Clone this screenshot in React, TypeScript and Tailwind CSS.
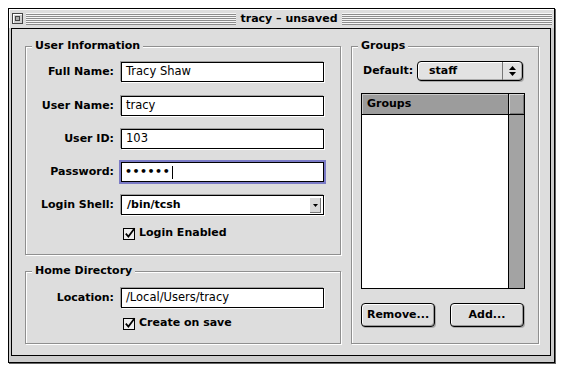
import React from 'react';

const sys = "font-['DejaVu_Sans',sans-serif] font-bold text-[11px] text-black";
const geneva = "font-['DejaVu_Sans',sans-serif] text-[11.5px] text-black";

const stripes =
  'bg-[image:repeating-linear-gradient(180deg,#f6f6f6_0px,#f6f6f6_1px,#8c8c8c_1px,#8c8c8c_2px)]';

function GroupBox({ title, className, children }: { title: string; className?: string; children?: React.ReactNode }) {
  return (
    <div className={`border border-[#8f8f8f] shadow-[inset_1px_1px_0_#fff,1px_1px_0_#fff] ${className ?? ''}`}>
      <div className={`-mt-[8px] ml-[6px] h-[14px] w-fit bg-[#dddddd] px-[3px] leading-[14px] ${sys}`}>{title}</div>
      {children}
    </div>
  );
}

function FieldRow({ label, className, children }: { label: string; className?: string; children: React.ReactNode }) {
  return (
    <div className={`flex h-[20px] items-center ${className ?? ''}`}>
      <div className={`w-[88px] text-right ${sys}`}>{label}</div>
      <div className="ml-[7px]">{children}</div>
    </div>
  );
}

function TextField({ value }: { value: string }) {
  return (
    <div
      className={`flex h-[20px] w-[203px] items-center border border-black bg-white pl-[4px] shadow-[1px_1px_0_#fff,-1px_-1px_0_#a0a0a0] ${geneva}`}
    >
      {value}
    </div>
  );
}

function PasswordField() {
  return (
    <div className="flex h-[20px] w-[203px] items-center border border-black bg-white pl-[3px] shadow-[0_0_0_2px_#7a7ac6]">
      <span className={`${sys} tracking-[0.5px]`}>••••••</span>
      <span className="ml-[2px] h-[13px] w-px bg-black" />
    </div>
  );
}

function ShellPopup() {
  return (
    <div className="flex h-[20px] w-[203px] items-center border border-black bg-white pl-[5px] pr-[2px] shadow-[1px_1px_0_#fff,-1px_-1px_0_#a0a0a0]">
      <span className={`flex-1 ${sys}`}>/bin/tcsh</span>
      <div className="flex h-[16px] w-[12px] items-center justify-center bg-[#d8d8d8] shadow-[inset_1px_1px_0_#fff,inset_-1px_-1px_0_#777]">
        <svg width="5" height="3" viewBox="0 0 5 3">
          <path d="M0 0h5L2.5 3z" fill="#000" />
        </svg>
      </div>
    </div>
  );
}

function Check({ label, className }: { label: string; className?: string }) {
  return (
    <div className={`flex h-[14px] items-center ${className ?? ''}`}>
      <svg width="13" height="13" viewBox="0 0 13 13" className="ml-[97px]">
        <rect x="0.5" y="1.5" width="11" height="11" fill="#eeeeee" stroke="#000" />
        <path d="M2.8 6.6 L5.4 9.6 L11.6 1.2" fill="none" stroke="#000" strokeWidth="1.7" />
      </svg>
      <span className={`ml-[3px] ${sys}`}>{label}</span>
    </div>
  );
}

function Button({ label, className }: { label: string; className?: string }) {
  return (
    <div
      className={`flex h-[24px] w-[74px] items-center justify-center rounded-[4px] border border-black bg-[#dddddd] shadow-[inset_1px_1px_0_#fff,inset_-1px_-1px_0_#999,1px_1px_0_#aaa] ${sys} ${className ?? ''}`}
    >
      {label}
    </div>
  );
}

function TitleBar() {
  return (
    <div className="flex h-[19px] items-center bg-[#dddddd] pl-[3px] pr-[2px] shadow-[inset_1px_1px_0_#fff]">
      <div className="flex h-[11px] w-[11px] items-center justify-center border border-[#444] bg-[#cfcfcf] shadow-[inset_1px_1px_0_#fff]">
        <div className="h-[5px] w-[5px] border border-[#444] bg-[#aaa]" />
      </div>
      <div className={`ml-[3px] h-[12px] flex-1 ${stripes}`} />
      <div className={`px-[4px] leading-[14px] ${sys}`}>tracy – unsaved</div>
      <div className={`h-[12px] flex-1 ${stripes}`} />
    </div>
  );
}

export default function App() {
  return (
    <div className="min-h-screen bg-white pl-[8px] pt-[8px]">
      <div className="flex h-[355px] w-[547px] flex-col border border-black bg-[#cccccc] shadow-[1px_1px_0_#666]">
        <TitleBar />
        <div className="ml-[2px] mr-[3px] flex h-[328px] border border-black bg-[#dddddd] pl-[13px] pr-[11px] pt-[17px]">
          {/* left column */}
          <div className="flex w-[316px] flex-col">
            <GroupBox title="User Information" className="h-[209px]">
              <div className="mt-[9px] flex flex-col gap-[13px]">
                <FieldRow label="Full Name:">
                  <TextField value="Tracy Shaw" />
                </FieldRow>
                <FieldRow label="User Name:" className="mt-[1px]">
                  <TextField value="tracy" />
                </FieldRow>
                <FieldRow label="User ID:">
                  <TextField value="103" />
                </FieldRow>
                <FieldRow label="Password:">
                  <PasswordField />
                </FieldRow>
                <FieldRow label="Login Shell:">
                  <ShellPopup />
                </FieldRow>
                <Check label="Login Enabled" className="-mt-[2px]" />
              </div>
            </GroupBox>

            <GroupBox title="Home Directory" className="mt-[16px] h-[73px]">
              <div className="mt-[10px] flex flex-col gap-[8px]">
                <FieldRow label="Location:">
                  <TextField value="/Local/Users/tracy" />
                </FieldRow>
                <Check label="Create on save" />
              </div>
            </GroupBox>
          </div>

          {/* right column */}
          <GroupBox title="Groups" className="ml-[10px] h-[298px] w-[188px]">
            <div className="pl-[9px]">
              <div className="mt-[8px] flex h-[20px] items-center">
                <div className={`ml-[2px] w-[54px] ${sys}`}>Default:</div>
                <div className="flex h-[20px] w-[106px] items-center rounded-[4px] border border-black bg-[#e2e2e2] shadow-[inset_1px_1px_0_#fff,inset_-1px_-1px_0_#aaa,1px_1px_0_#aaa]">
                  <span className={`flex-1 pl-[11px] ${sys}`}>staff</span>
                  <div className="h-full w-px bg-[#777]" />
                  <div className="flex w-[19px] items-center justify-center">
                    <svg width="7" height="10" viewBox="0 0 7 10">
                      <path d="M3.5 0L7 4H0z M0 6h7L3.5 10z" fill="#000" />
                    </svg>
                  </div>
                </div>
              </div>

              <div className="mt-[12px] flex h-[196px] w-[164px] border border-black bg-white">
                <div className="flex flex-1 flex-col">
                  <div className={`flex h-[21px] items-center border-b border-black bg-[#9c9c9c] pl-[5px] shadow-[inset_1px_1px_0_#c8c8c8] ${sys}`}>
                    Groups
                  </div>
                  <div className="flex-1 bg-white" />
                </div>
                <div className="flex w-[16px] flex-col border-l border-black bg-[#a3a3a3]">
                  <div className="h-[21px] border-b border-black bg-[#a8a8a8] shadow-[inset_1px_1px_0_#d8d8d8,inset_-1px_-1px_0_#777]" />
                  <div className="flex-1" />
                </div>
              </div>

              <div className="mt-[14px] flex">
                <Button label="Remove..." />
                <Button label="Add..." className="ml-[15px]" />
              </div>
            </div>
          </GroupBox>
        </div>
      </div>
    </div>
  );
}
